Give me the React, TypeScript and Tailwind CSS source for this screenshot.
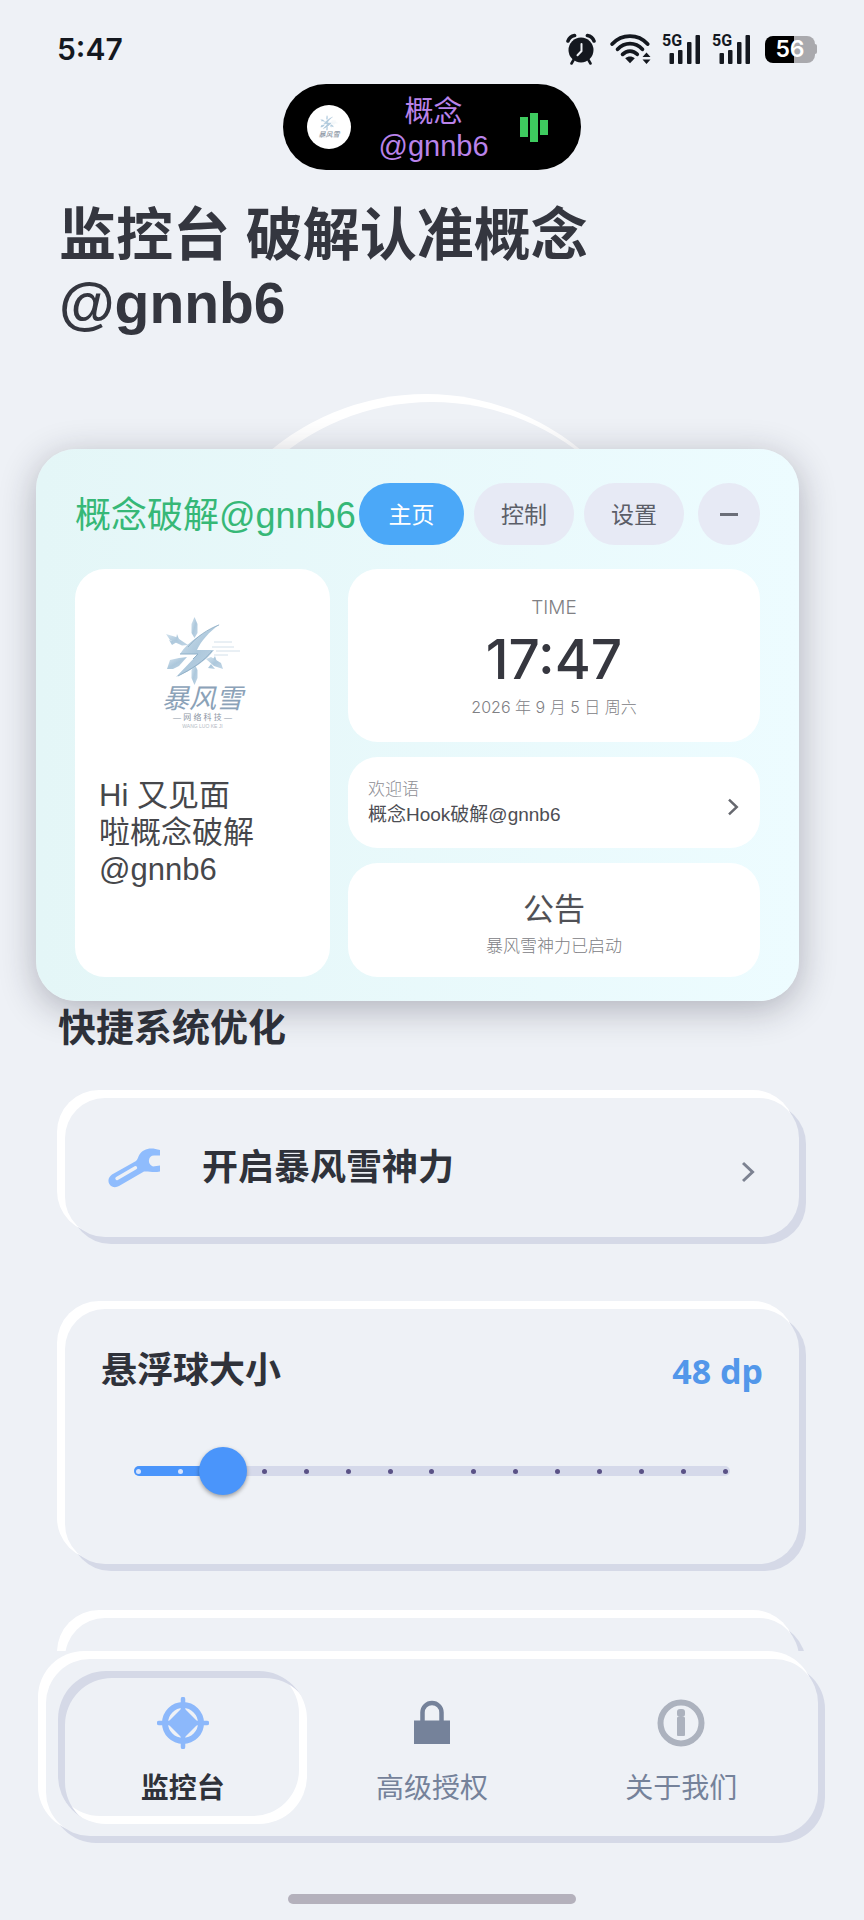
import React, { useState } from 'react';
import clsx from 'clsx';

const TICKS = Array.from({ length: 15 }, (_, i) => 40 + i * 4);

const raised = 'bg-[#eef1f6] shadow-[-6px_-6px_0_2px_#ffffff,6px_6px_0_1px_#d5d9e7]';

const AlarmIcon: React.FC = () => (
  <svg viewBox="0 0 30 32" className="h-8 w-[30px]" aria-hidden="true">
    <circle cx="15" cy="17" r="12.5" fill="#14181f" />
    <path d="M2 8C3 5 5.600 3 8.600 2.500M28 8C27 5 24.400 3 21.400 2.500" stroke="#14181f" strokeWidth="3.600" strokeLinecap="round" fill="none" />
    <path d="M7.500 27 5.500 30.500M22.500 27l2 3.500" stroke="#14181f" strokeWidth="2.600" strokeLinecap="round" />
    <path d="M15.500 11v7l-4 4.200" stroke="#eef1f6" strokeWidth="2" fill="none" strokeLinecap="round" />
  </svg>
);

const WifiIcon: React.FC = () => (
  <svg viewBox="0 0 41 30" className="h-[30px] w-[41px]" aria-hidden="true">
    <g fill="none" stroke="#14181f" strokeWidth="3.800" strokeLinecap="round">
      <path d="M2.200 10C12-.5 28-.5 37.600 10" />
      <path d="M7.600 15.300c7-7.500 17.800-7.500 24.800 0" />
      <path d="M12.600 20.300c4.200-4.300 10.600-4.300 14.600 0" />
    </g>
    <path d="M15.200 24.200c2.800-2.400 6.800-2.400 9.600 0L20 29.200z" fill="#14181f" />
    <path d="M32.500 23 36.500 18.500 40.500 23zM32.500 25.500 36.500 30 40.500 25.500z" fill="#14181f" />
  </svg>
);

const SignalIcon: React.FC = () => (
  <div className="relative h-[30px] w-[39px]">
    <span className="absolute left-0 top-0 font-['Roboto',sans-serif] text-[16px] font-bold leading-[14px] text-[#14181f]">5G</span>
    <svg viewBox="0 0 39 30" className="h-[30px] w-[39px]" aria-hidden="true">
      <g fill="#14181f">
        <rect x="7.500" y="19" width="4.500" height="11" rx="1" />
        <rect x="16" y="16" width="4.500" height="14" rx="1" />
        <rect x="25" y="8" width="4.500" height="22" rx="1" />
        <rect x="33.500" y="1" width="4.500" height="29" rx="1" />
      </g>
    </svg>
  </div>
);

const SnowMark: React.FC<{ className?: string }> = ({ className }) => (
  <svg viewBox="0 0 74 68" className={className} aria-hidden="true">
    <defs>
      <linearGradient id="ice" x1="0" y1="0" x2="1" y2="1">
        <stop offset="0" stopColor="#d5e4ef" />
        <stop offset="0.500" stopColor="#adc8dc" />
        <stop offset="1" stopColor="#c2d6e6" />
      </linearGradient>
    </defs>
    <g fill="url(#ice)">
      <path d="M28.500 0l3 7v9l-3 5-3-5V7z" />
      <path d="M28.500 68l3-7v-8l-3-6-3 6v8z" />
      <path d="M0 17l10 3 12 8-6 .5L4 23z" />
      <path d="M3 23l8 2-5 3zM11 17l3 8-4-3z" />
      <path d="M57 52l-9-3-8-7 5-2 10 6z" />
      <path d="M47 42l2-3 2 6zM42 51l7 1-4-5z" />
      <path d="M1 52l3-9 9-2 8-1-8 9-6 3z" />
      <path d="M54 7C40 14 22 24 14 37h18L10 60c16-7 30-16 38-27H31c4-9 12-18 23-26z" />
    </g>
    <path d="M22 30C30 20 42 12 53 8M12 59c14-7 26-15 34-25" stroke="#8aa9c2" strokeWidth="0.800" fill="none" />
    <path d="M48 25h18M46 30h22M50 34h24M48 38h14" stroke="#d3e0ea" strokeWidth="1" />
    <path d="M14 37h18l-5 5" stroke="#8fb0c8" strokeWidth="1" fill="none" />
  </svg>
);

const Chevron: React.FC<{ className?: string }> = ({ className }) => (
  <svg viewBox="0 0 13 22" className={className} fill="none" stroke="currentColor" strokeWidth="3" aria-hidden="true">
    <path d="M1 2 10.500 11 1 20" />
  </svg>
);

const WrenchIcon: React.FC = () => (
  <svg viewBox="0 0 52 40" className="h-10 w-[52px]" aria-hidden="true">
    <path
      d="M52 2C42-1.500 35 1 31.500 6.500 30 9 30 11 28 13L4 26.500C-1 30-.5 36 4 38.500c2 1 5 .8 7-.5L36 23.500c5-.5 9 1.500 16 0V17.500l-7 1c-3-1-4.500-3.500-4-6.500.5-3 2-4.500 5-4.500H52z"
      fill="#8fbcfd"
    />
    <path d="M9 30.500 27.500 19.800" stroke="#eef1f6" strokeWidth="3.400" strokeLinecap="round" />
  </svg>
);

const TargetIcon: React.FC = () => (
  <svg viewBox="-26 -26 52 52" className="h-[52px] w-[52px]" aria-hidden="true">
    <circle r="18" fill="none" stroke="#8cb8fb" strokeWidth="6" />
    <path d="M0-16 16 0 0 16-16 0z" fill="#8cb8fb" />
    <path d="M0-24V24M-24 0H24" stroke="#8cb8fb" strokeWidth="4.500" strokeLinecap="round" />
  </svg>
);

const LockIcon: React.FC = () => (
  <svg viewBox="-26 -26 52 52" className="h-[52px] w-[52px]" aria-hidden="true">
    <path d="M-18-2.500H18V21H-18z" fill="#75829a" />
    <path d="M-9.500-2V-10.500a9.500 9.500 0 0 1 19 0V-2" fill="none" stroke="#75829a" strokeWidth="4.500" />
  </svg>
);

const InfoIcon: React.FC = () => (
  <svg viewBox="-26 -26 52 52" className="h-[52px] w-[52px]" aria-hidden="true">
    <circle r="20.500" fill="none" stroke="#acb2be" strokeWidth="6" />
    <rect x="-4" y="-6" width="8" height="19" rx="1" fill="#acb2be" />
    <rect x="-4" y="-14" width="8" height="8" rx="3" fill="#acb2be" />
  </svg>
);

const StatusBar: React.FC = () => (
  <div className="flex h-8 items-center justify-between pl-[57px] pr-[47px]">
    <span className="font-['Inter',sans-serif] text-[30px] font-semibold leading-8 text-[#14181f]">5:47</span>
    <div className="flex items-center gap-[11px]">
      <div className="flex items-center gap-[14px]">
        <AlarmIcon />
        <WifiIcon />
      </div>
      <SignalIcon />
      <SignalIcon />
      <div className="ml-[3px] flex items-center">
        <div className="flex h-[27px] w-[50px] items-center justify-center rounded-[8px] bg-linear-to-r from-black from-58% to-[#a9a9ad] to-58% font-['Inter',sans-serif] text-[23px] font-semibold leading-[27px] text-white">
          56
        </div>
        <div className="h-[10px] w-[2px] rounded-r bg-[#a9a9ad]"></div>
      </div>
    </div>
  </div>
);

const FloatingPanel: React.FC = () => {
  const [tab, setTab] = useState('主页');

  return (
    <div className="absolute left-[36px] right-[65px] top-[112px] rounded-[40px] bg-linear-to-r from-[#e4f6f7] to-[#edfcff] px-[39px] pb-6 pt-[34px] shadow-[0_8px_36px_rgba(30,30,50,0.3)]">
      <div className="flex items-center justify-between">
        <h2 className="whitespace-nowrap pt-1 text-[36px] leading-[48px] text-[#36b877]">概念破解@gnnb6</h2>
        <div className="flex shrink-0 items-center gap-[10px]">
          {['主页', '控制', '设置'].map((name) => (
            <button
              key={name}
              type="button"
              onClick={() => setTab(name)}
              className={clsx(
                'h-[62px] rounded-full pt-[2px] text-[23px]',
                tab === name ? 'w-[105px] bg-[#4ba8f8] text-white' : 'w-[100px] bg-[#e7eaf5] text-[#5b5e68]'
              )}
            >
              {name}
            </button>
          ))}
          <button type="button" aria-label="最小化" className="ml-1 flex h-[62px] w-[62px] items-center justify-center rounded-full bg-[#e7eaf5]">
            <span className="h-[3px] w-[18px] bg-[#6b6e78]"></span>
          </button>
        </div>
      </div>

      <div className="mt-6 grid grid-cols-[255fr_412fr] gap-[18px]">
        <div className="rounded-[30px] bg-white px-6 pt-12">
          <div className="flex flex-col items-center">
            <SnowMark className="h-[68px] w-[74px]" />
            <p className="text-[27px] italic leading-7 text-[#8ba2b8]">暴风雪</p>
            <p className="text-[8px] leading-[10px] text-[#8b95a3]">— 网 络 科 技 —</p>
            <p className="text-[5px] leading-[6px] text-[#b3bac4]">WANG LUO KE JI</p>
          </div>
          <p className="mt-12 whitespace-nowrap text-[31px] leading-[37px] text-[#46474b]">
            Hi 又见面
            <br />
            啦概念破解
            <br />
            @gnnb6
          </p>
        </div>

        <div className="flex flex-col gap-[15px]">
          <div className="flex h-[173px] flex-col items-center rounded-[30px] bg-white pt-6">
            <p className="font-['Inter',sans-serif] text-[19px] font-light leading-[30px] text-[#808084]">TIME</p>
            <p className="font-['Inter',sans-serif] text-[55px] font-medium leading-[72px] text-[#36373f]">17:47</p>
            <p className="font-['Inter','Noto_Sans_CJK_SC',sans-serif] text-[16px] font-light leading-[24px] text-[#808084]">2026 年 9 月 5 日 周六</p>
          </div>
          <button type="button" className="flex h-[91px] items-center justify-between rounded-[30px] bg-white pl-5 pr-5 text-left">
            <span className="flex flex-col">
              <span className="text-[17px] font-light leading-[24px] text-[#8e8e94]">欢迎语</span>
              <span className="text-[19px] leading-[26px] text-[#4d4e54]">概念Hook破解@gnnb6</span>
            </span>
            <Chevron className="mt-2 h-[18px] w-[13px] text-[#66686f]" />
          </button>
          <div className="flex h-[114px] flex-col items-center rounded-[30px] bg-white pt-[26px]">
            <p className="text-[31px] leading-[42px] text-[#505156]">公告</p>
            <p className="mt-1 text-[17px] font-light leading-[24px] text-[#808084]">暴风雪神力已启动</p>
          </div>
        </div>
      </div>
    </div>
  );
};

const SizeCard: React.FC = () => {
  const [size, setSize] = useState(48);

  return (
    <div className={clsx('mt-[72px] h-[255px] rounded-[40px] pt-[38px]', raised)}>
      <div className="flex items-center justify-between pl-9 pr-9 text-[36px] font-bold leading-[48px]">
        <label htmlFor="ball-size" className="text-[#2f323a]">悬浮球大小</label>
        <span className="font-['Noto_Sans',sans-serif] text-[34px] text-[#5297ea]">{size} dp</span>
      </div>
      <div className="relative mx-[50px] mt-[52px] h-12">
        <div className="absolute inset-x-[19px] top-[19px] h-[10px] overflow-hidden rounded-full bg-[#d5d9ea]">
          <div className="h-full bg-[#4a95fb]" style={{ width: `${((size - 40) / 56) * 100}%` }}></div>
        </div>
        <div className="absolute inset-x-[21px] top-[22px] flex justify-between">
          {TICKS.map((value) => (
            <span key={value} className={clsx('h-[5px] w-[5px] rounded-full', value < size ? 'bg-[#d9e4fb]' : 'bg-[#5a5286]')}></span>
          ))}
        </div>
        <input
          id="ball-size"
          type="range"
          min={40}
          max={96}
          step={4}
          value={size}
          onChange={(e) => setSize(Number(e.target.value))}
          className="absolute inset-0 h-12 w-full appearance-none bg-transparent [&::-webkit-slider-thumb]:h-12 [&::-webkit-slider-thumb]:w-12 [&::-webkit-slider-thumb]:appearance-none [&::-webkit-slider-thumb]:rounded-full [&::-webkit-slider-thumb]:bg-[#4a95fb] [&::-webkit-slider-thumb]:shadow-[0_2px_4px_rgba(0,0,0,0.35)]"
        />
      </div>
    </div>
  );
};

const NAV_ITEMS = [
  { name: '监控台', icon: <TargetIcon /> },
  { name: '高级授权', icon: <LockIcon /> },
  { name: '关于我们', icon: <InfoIcon /> },
];

const BottomNav: React.FC = () => {
  const [active, setActive] = useState('监控台');

  return (
    <footer className="shrink-0 px-[46px] pb-4 pt-2">
      <nav className={clsx('grid grid-cols-3 rounded-[44px] p-3', raised)}>
        {NAV_ITEMS.map((item) => (
          <button
            key={item.name}
            type="button"
            onClick={() => setActive(item.name)}
            className={clsx(
              'flex h-[153px] flex-col items-center gap-[22px] rounded-[48px] pt-[26px] text-[28px] leading-9',
              active === item.name
                ? 'font-bold text-[#2f323a] shadow-[inset_6px_6px_0_1px_#d5d9e7,inset_-6px_-6px_0_2px_#ffffff]'
                : 'text-[#75829a]'
            )}
          >
            {item.icon}
            {item.name}
          </button>
        ))}
      </nav>
      <div className="mx-auto mt-[58px] h-[10px] w-[288px] rounded-full bg-[#b4b1bc]"></div>
    </footer>
  );
};

const App: React.FC = () => {
  return (
    <div className="flex h-screen flex-col bg-[#eef1f6] font-['Liberation_Sans','Noto_Sans_CJK_SC',sans-serif]">
      <main className="min-h-0 flex-1 overflow-y-auto pt-[33px] [scrollbar-width:none]">
        <StatusBar />

        {/* Dynamic island */}
        <div className="mx-auto mt-[19px] flex h-[86px] w-[298px] items-center justify-between rounded-full bg-black pl-6 pr-[33px]">
          <div className="flex h-11 w-11 flex-col items-center justify-center rounded-full bg-white">
            <SnowMark className="h-4 w-[18px]" />
            <span className="text-[7px] font-medium italic leading-[8px] text-[#8b95a3]">暴风雪</span>
          </div>
          <p className="pr-1 pt-[3px] text-center text-[29px] leading-[34px] text-[#b983ea]">
            概念
            <br />
            @gnnb6
          </p>
          <div className="flex items-center gap-[2px]">
            <span className="h-5 w-2 bg-[#3ecb5f]"></span>
            <span className="h-[29px] w-2 bg-[#3ecb5f]"></span>
            <span className="h-[15px] w-2 bg-[#3ecb5f]"></span>
          </div>
        </div>

        <h1 className="mt-[31px] px-[59px] text-[57px] font-bold leading-[68px] text-[#34363f]">
          监控台 破解认准概念
          <br />
          @gnnb6
        </h1>

        <section className="relative pb-[122px] pt-[65px]">
          <div className={clsx('mx-auto h-[480px] w-[480px] rounded-full', raised)}></div>
          <FloatingPanel />
        </section>

        <div className="px-[65px] pb-10">
          <h2 className="-ml-[7px] text-[38px] font-bold leading-[48px] text-[#2f323a]">快捷系统优化</h2>

          <button type="button" className={clsx('mt-[46px] flex h-[139px] w-full items-center rounded-[40px] pl-[43px] pr-[44px]', raised)}>
            <WrenchIcon />
            <span className="ml-[42px] flex-1 text-left text-[36px] font-bold leading-[48px] text-[#2f323a]">开启暴风雪神力</span>
            <Chevron className="mt-2 h-[22px] w-[13px] text-[#7c8291]" />
          </button>

          <SizeCard />

          <div className={clsx('mt-[54px] h-[139px] rounded-[40px]', raised)}></div>
        </div>
      </main>

      <BottomNav />
    </div>
  );
};

export default App;
